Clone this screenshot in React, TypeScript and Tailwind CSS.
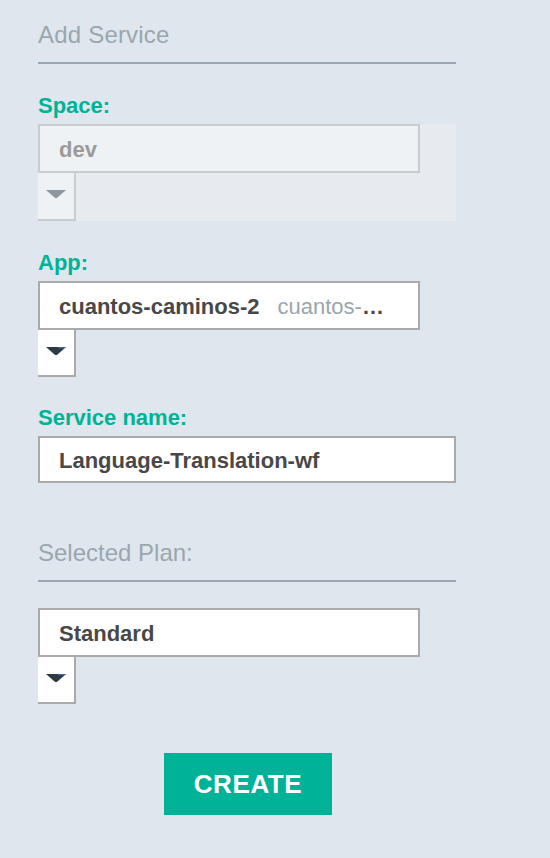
import React from 'react'

function Caret({ disabled }: { disabled?: boolean }) {
  return (
    <svg width="20" height="8" viewBox="0 0 20 8" className="block">
      <path d="M0 0 H20 L11.5 7.4 Q10 8.4 8.5 7.4 Z" fill={disabled ? '#8f979e' : '#2e3a45'} />
      {!disabled && <path d="M12 0 H20 L18.5 1.3 H12 Z" fill="#3f6e9c" />}
    </svg>
  )
}

function SelectBox({ children, disabled }: { children: React.ReactNode; disabled?: boolean }) {
  return (
    <div className="flex flex-col">
      <div
        className={
          disabled
            ? 'flex h-[49px] w-[382px] items-center border-2 border-[#c8ccd0] bg-[#eef2f5] pl-[19px] pt-[2px]'
            : 'flex h-[49px] w-[382px] items-center border-2 border-[#aaaaaa] bg-white pl-[19px] pt-[2px]'
        }
      >
        {children}
      </div>
      <div
        className={
          disabled
            ? 'flex h-[48px] w-[38px] items-center justify-center border-r-2 border-b-2 border-[#c8ccd0] bg-[#eef2f5] pb-[4px]'
            : 'flex h-[47px] w-[38px] items-center justify-center border-r-2 border-b-2 border-[#aaaaaa] bg-white pb-[4px]'
        }
      >
        <Caret disabled={disabled} />
      </div>
    </div>
  )
}

function Label({ children }: { children: React.ReactNode }) {
  return <div className="text-[22px] font-bold leading-[24px] text-[#00b398]">{children}</div>
}

export default function App() {
  return (
    <div
      className="min-h-[858px] w-full bg-[#dfe6ed] pl-[38px]"
      style={{ fontFamily: '"Liberation Sans", Arial, sans-serif' }}
    >
      <div className="flex w-[418px] flex-col">
        {/* Header */}
        <div className="mt-[21px] text-[24px] leading-[28px] tracking-[0.2px] text-[#9aa6ae]">Add Service</div>
        <div className="mt-[13px] h-[2px] bg-[#9aa6ae]" />

        {/* Space */}
        <div className="mt-[30px] mb-[6px]">
          <Label>Space:</Label>
        </div>
        <div className="bg-[#e7ebef]">
          <SelectBox disabled>
            <span className="text-[22px] font-bold text-[#9a9a9a]">dev</span>
          </SelectBox>
        </div>

        {/* App */}
        <div className="mt-[30px] mb-[6px]">
          <Label>App:</Label>
        </div>
        <SelectBox>
          <span className="whitespace-nowrap text-[22px] font-bold text-[#484848]">cuantos-caminos-2</span>
          <span className="ml-[18px] whitespace-nowrap text-[22px] text-[#9aa6ae]">cuantos-</span>
          <span className="text-[22px] font-bold text-[#484848]">…</span>
        </SelectBox>

        {/* Service name */}
        <div className="mt-[29px] mb-[6px]">
          <Label>Service name:</Label>
        </div>
        <input
          readOnly
          value="Language-Translation-wf"
          className="h-[47px] w-[418px] border-2 border-[#aaaaaa] bg-white pl-[19px] pt-[2px] text-[22px] font-bold text-[#484848] outline-none"
        />

        {/* Plan */}
        <div className="mt-[56px] text-[24px] leading-[28px] text-[#9aa6ae]">Selected Plan:</div>
        <div className="mt-[13px] h-[2px] bg-[#9aa6ae]" />
        <div className="mt-[26px]">
          <SelectBox>
            <span className="text-[22px] font-bold text-[#484848]">Standard</span>
          </SelectBox>
        </div>

        <button className="mx-auto mt-[49px] h-[62px] w-[168px] translate-x-[1px] bg-[#00b398] text-[26px] font-bold tracking-[0.6px] text-white">
          CREATE
        </button>
      </div>
    </div>
  )
}
